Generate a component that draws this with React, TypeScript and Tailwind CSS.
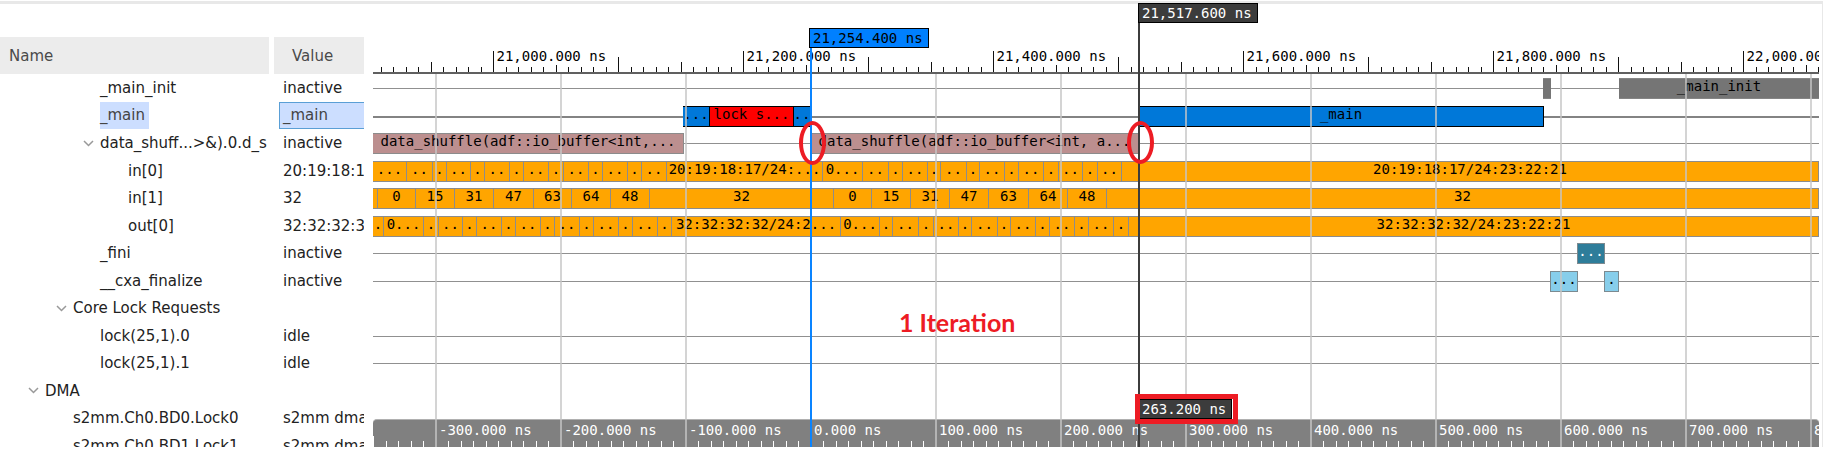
import React from "react";

type Tone = "idle" | "active" | "gray" | "blue" | "red" | "rose" | "orange" | "teal" | "sky";
/** [end position on the time axis or null for "until the right edge", tone, label] */
type Segment = [number | null, Tone, string?];

type Signal = {
  name: string;
  value?: string;
  indent: string;
  open?: boolean;
  selected?: boolean;
  wave?: Segment[];
};

const toneClass: Record<Tone, string> = {
  idle: "",
  active: "",
  gray: "border-y border-[#858585] bg-[#757575] text-black",
  blue: "border-y border-r border-black bg-[#0078d9] text-black",
  red: "border-y border-r border-black bg-[#fe0000] text-black",
  rose: "border-y border-r border-[#8c8c8c] bg-[#bc8f8f] text-black",
  orange: "border-y border-r border-[#8c8c8c] bg-[#ffa500] text-black",
  teal: "border border-[#7c8a90] bg-[#2e7d9a] text-white",
  sky: "border border-[#7c8a90] bg-[#87ceeb] text-black",
};

const orange = (ends: (number | null)[], labels: string[]): Segment[] =>
  ends.map((end, i) => [end, "orange", labels[i]]);

const idle: Segment[] = [[null, "idle"]];

const signals: Signal[] = [
  {
    name: "_main_init",
    value: "inactive",
    indent: "pl-[100px]",
    wave: [[1170, "idle"], [1178, "gray"], [1246, "idle"], [null, "gray", "_main_init"]],
  },
  {
    name: "_main",
    value: "_main",
    indent: "pl-[100px]",
    selected: true,
    wave: [
      [310, "active"],
      [337, "blue", "..."],
      [421, "red", "lock s..."],
      [438, "blue", ".."],
      [766, "active"],
      [1171, "blue", "_main"],
      [null, "active"],
    ],
  },
  {
    name: "data_shuff...>&).0.d_s",
    value: "inactive",
    indent: "pl-[81px]",
    open: true,
    wave: [
      [311, "rose", "data_shuffle(adf::io_buffer<int,..."],
      [438, "idle"],
      [766, "rose", "data_shuffle(adf::io_buffer<int, a..."],
      [null, "idle"],
    ],
  },
  {
    name: "in[0]",
    value: "20:19:18:1",
    indent: "pl-[128px]",
    wave: orange(
      [34, 60, 74, 98, 112, 137, 151, 176, 191, 216, 230, 255, 269, 294, 450, 490, 516, 530, 555, 568, 594, 607, 632, 646, 671, 686, 710, 725, 749, null],
      ["...", "..", ".", "..", ".", "..", ".", "..", ".", "..", ".", "..", ".", "..", "20:19:18:17/24:...", "0...", "..", ".", "..", ".", "..", ".", "..", ".", "..", ".", "..", ".", "..", "20:19:18:17/24:23:22:21"],
    ),
  },
  {
    name: "in[1]",
    value: "32",
    indent: "pl-[128px]",
    wave: orange(
      [5, 43, 82, 121, 161, 199, 238, 277, 461, 499, 538, 577, 616, 656, 695, 734, null],
      ["", "0", "15", "31", "47", "63", "64", "48", "32", "0", "15", "31", "47", "63", "64", "48", "32"],
    ),
  },
  {
    name: "out[0]",
    value: "32:32:32:3",
    indent: "pl-[128px]",
    wave: orange(
      [11, 51, 66, 90, 104, 129, 143, 168, 182, 207, 221, 246, 260, 285, 299, 468, 507, 520, 546, 561, 586, 599, 625, 638, 663, 677, 702, 716, 741, 756, null],
      [".", "0...", ".", "..", ".", "..", ".", "..", ".", "..", ".", "..", ".", "..", ".", "32:32:32:32/24:2...", "0...", ".", "..", ".", "..", ".", "..", ".", "..", ".", "..", ".", "..", ".", "32:32:32:32/24:23:22:21"],
    ),
  },
  {
    name: "_fini",
    value: "inactive",
    indent: "pl-[100px]",
    wave: [[1204, "idle"], [1232, "teal", "..."], [null, "idle"]],
  },
  {
    name: "__cxa_finalize",
    value: "inactive",
    indent: "pl-[100px]",
    wave: [[1177, "idle"], [1205, "sky", "..."], [1231, "idle"], [1246, "sky", "."], [null, "idle"]],
  },
  { name: "Core Lock Requests", indent: "pl-[54px]", open: true },
  { name: "lock(25,1).0", value: "idle", indent: "pl-[100px]", wave: idle },
  { name: "lock(25,1).1", value: "idle", indent: "pl-[100px]", wave: idle },
  { name: "DMA", indent: "pl-[26px]", open: true },
  { name: "s2mm.Ch0.BD0.Lock0", value: "s2mm dma", indent: "pl-[73px]" },
  { name: "s2mm.Ch0.BD1.Lock1", value: "s2mm dma", indent: "pl-[73px]" },
];

const STEP = 12.5;
const MAJOR_START = 120.5;
const GRID_START = 63;
const GRID_STEP = 125;

const majorLabels = ["21,000.000 ns", "21,200.000 ns", "21,400.000 ns", "21,600.000 ns", "21,800.000 ns", "22,000.000 ns"];
const offsetLabels = [-300, -200, -100, 0, 100, 200, 300, 400, 500, 600, 700, 800];

function tickHeight(index: number) {
  const phase = ((index % 20) + 20) % 20;
  if (phase === 0) return 21;
  if (phase === 10) return 15;
  if (phase === 15) return 10;
  if (phase === 5) return 7;
  return 5;
}

function Wave({ segments }: { segments: Segment[] }) {
  let start = 0;
  return (
    <div className="flex h-[21px]">
      {segments.map(([end, tone, label], i) => {
        const style = end === null ? undefined : { width: end - start };
        const size = end === null ? "min-w-0 flex-1" : "shrink-0";
        if (end !== null) start = end;
        if (tone === "idle" || tone === "active") {
          return (
            <div key={i} style={style} className={`flex items-center ${size}`}>
              <div className={tone === "active" ? "h-[2px] w-full bg-[#838383]" : "h-px w-full bg-[#909090]"} />
            </div>
          );
        }
        return (
          <div
            key={i}
            style={style}
            className={`flex justify-center overflow-hidden whitespace-pre leading-[15px] ${size} ${toneClass[tone]}`}
          >
            {label}
          </div>
        );
      })}
    </div>
  );
}

function SignalTable() {
  return (
    <div className="w-[364px] shrink-0 overflow-hidden pt-[33px]">
      <table className="w-full table-fixed border-separate border-spacing-0 text-left text-[15px] leading-5 text-[#222]">
        <thead>
          <tr className="h-[37px] text-[#4a4a4a]">
            <th scope="col" className="w-[274px] border-r-[5px] border-white bg-[#ececec] p-0 pl-[9px] font-normal">Name</th>
            <th scope="col" className="bg-[#ececec] p-0 pl-[18px] font-normal">Value</th>
          </tr>
        </thead>
        <tbody>
          {signals.map((s) => (
            <tr key={s.name} className="odd:h-7 even:h-[27px]">
              <td className="p-0">
                <div className={`mr-[5px] flex items-center overflow-hidden whitespace-nowrap ${s.indent}`}>
                  {s.open && (
                    <button type="button" aria-label={`Collapse ${s.name}`} className="mr-[5px] flex w-3.5 shrink-0 justify-center">
                      <svg width="11" height="7" viewBox="0 0 11 7" fill="none" stroke="#999" strokeWidth="1.5">
                        <path d="M1 1l4.5 4.5L10 1" />
                      </svg>
                    </button>
                  )}
                  {s.selected ? (
                    <span className="bg-[#ccdeff] py-[3px] pr-1 leading-[21px] text-[#444]">{s.name}</span>
                  ) : (
                    <span>{s.name}</span>
                  )}
                </div>
              </td>
              <td className="p-0">
                {s.selected ? (
                  <div className="ml-[5px] overflow-hidden border border-r-0 border-[#5a9fd6] bg-[#ccdeff] pl-[3px] leading-[25px] text-[#444]">
                    {s.value}
                  </div>
                ) : (
                  <div className="overflow-hidden whitespace-nowrap pl-[9px]">{s.value}</div>
                )}
              </td>
            </tr>
          ))}
        </tbody>
      </table>
    </div>
  );
}

function TopRuler() {
  return (
    <div className="relative h-[70px] shrink-0 overflow-hidden border-b-2 border-[#606060]">
      <svg className="absolute bottom-0 left-0 h-[21px] w-full" shapeRendering="crispEdges" aria-hidden="true">
        {Array.from({ length: 116 }, (_, n) => {
          const index = n - 9;
          const h = tickHeight(index);
          return <rect key={n} x={Math.floor(MAJOR_START + index * STEP)} y={21 - h} width="1" height={h} fill="#111" />;
        })}
      </svg>
      {majorLabels.map((label, i) => (
        <span key={label} style={{ left: MAJOR_START + 3 + i * 250 }} className="absolute top-[44px] whitespace-pre leading-4">
          {label}
        </span>
      ))}
    </div>
  );
}

function BottomRuler() {
  return (
    <div className="relative h-7 shrink-0 overflow-hidden rounded-t-sm border-t border-[#b0b0b0] bg-[#808080] text-white">
      <svg className="absolute bottom-0 left-0 h-[11px] w-full" shapeRendering="crispEdges" aria-hidden="true">
        {Array.from({ length: 116 }, (_, n) => {
          const h = n === 0 ? 11 : 6;
          return n % 10 === 5 ? null : <rect key={n} x={Math.floor(0.5 + n * STEP)} y={11 - h} width="1" height={h} fill="#fff" />;
        })}
      </svg>
      {offsetLabels.map((t, i) => (
        <span key={t} style={{ left: GRID_START + 3 + i * GRID_STEP }} className="absolute top-[2px] whitespace-pre leading-4">
          {`${t}.000 ns`}
        </span>
      ))}
    </div>
  );
}

function Waveform() {
  return (
    <div className="relative ml-[9px] mr-[6px] flex min-w-0 flex-1 flex-col font-['DejaVu_Sans_Mono',monospace] text-[14px] text-black">
      <TopRuler />
      <div className="min-h-0 flex-1 overflow-hidden">
        <div className="grid auto-rows-[28px_27px]">
          {signals.map((s) => (
            <div key={s.name} className="overflow-hidden pt-1">
              {s.wave && <Wave segments={s.wave} />}
            </div>
          ))}
        </div>
      </div>
      <BottomRuler />

      <div className="pointer-events-none absolute inset-x-0 bottom-0 top-[70px] overflow-hidden">
        {offsetLabels.map((t, i) => (
          <div key={t} style={{ left: GRID_START - 1 + i * GRID_STEP }} className="absolute inset-y-0 w-[2px] bg-[#c6c6c6]/75" />
        ))}
      </div>

      <div className="absolute bottom-0 left-[437px] top-[25px] w-[2px] bg-[#0a84ff]" />
      <div className="absolute left-[436px] top-6 w-[120px] whitespace-pre border border-black bg-[#0080ff] pl-[3px] leading-[18px]">
        21,254.400 ns
      </div>
      <div className="absolute -top-px bottom-0 left-[765px] w-[2px] bg-[#3c3c3c]" />
      <div className="absolute -top-px left-[765px] w-[120px] whitespace-pre border border-black bg-[#3c3c3c] pl-[3px] leading-[18px] text-white">
        21,517.600 ns
      </div>
      <div className="absolute bottom-[23px] left-[762px] border-[5px] border-[#ed1c24] bg-white">
        <div className="mr-px w-[92px] whitespace-pre border border-l-0 border-black bg-[#3c3c3c] pl-[2px] leading-[18px] text-white">
          263.200 ns
        </div>
      </div>
      <div className="absolute left-[426px] top-[117px] h-[44px] w-[27px] rounded-[50%] border-4 border-[#ed1c24]" />
      <div className="absolute left-[754px] top-[117px] h-[43px] w-[27px] rounded-[50%] border-4 border-[#ed1c24]" />
      <p className="absolute left-[526px] top-[303px] whitespace-nowrap font-['Lato',sans-serif] text-[25px] leading-[30px] font-bold text-[#ed1c24]">
        1 Iteration
      </p>
    </div>
  );
}

export default function App() {
  return (
    <main className="flex h-screen flex-col bg-white pb-[5px] pt-px font-['DejaVu_Sans',sans-serif]">
      <div className="mr-[2px] flex min-h-0 flex-1 border-r border-t-[3px] border-r-[#e8e8e8] border-t-[#e8e8e8]">
        <SignalTable />
        <div className="-mr-[3px] flex min-w-0 flex-1">
          <Waveform />
        </div>
      </div>
    </main>
  );
}
